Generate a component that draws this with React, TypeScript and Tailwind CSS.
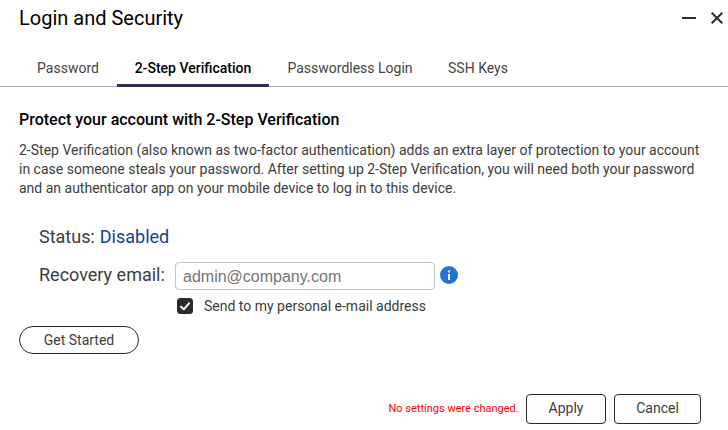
import React from "react";

const tabs = [
  { label: "Password", cls: "w-[98px] text-[#444]" },
  { label: "2-Step Verification", cls: "w-[152px] font-medium text-black border-b-[3px] border-[#322b4e]" },
  { label: "Passwordless Login", cls: "w-[162px] text-[#444]" },
  { label: "SSH Keys", cls: "w-[94px] text-[#444]" },
];

export default function App() {
  return (
    <main className="h-[430px] w-[728px] overflow-hidden bg-white font-['Roboto',sans-serif] text-[#3c3c3c]">
      <header className="flex h-[50px] items-start justify-between pl-[19px] pr-[4px]">
        <h1 className="pt-[4px] text-[20px] leading-7 text-black">Login and Security</h1>
        <div className="flex gap-[14px] pt-[11px]">
          <svg width="14" height="14" viewBox="0 0 14 14" stroke="#2d2d2d" strokeWidth="2"><path d="M0 7H14" /></svg>
          <svg width="14" height="14" viewBox="0 0 14 14" stroke="#2d2d2d" strokeWidth="2"><path d="M1.7 1.7L12.3 12.3M12.3 1.7L1.7 12.3" /></svg>
        </div>
      </header>
      <nav className="flex h-[37px] border-b border-[#aaa] pl-[19px]">
        {tabs.map((t) => (
          <div key={t.label} className={"flex h-[37px] justify-center pt-[8px] text-[14px] leading-5 " + t.cls}>{t.label}</div>
        ))}
      </nav>
      <section className="pl-[19px] pt-[23px]">
        <h2 className="text-[16px] font-medium leading-5 text-black">Protect your account with 2-Step Verification</h2>
        <p className="mt-[11px] whitespace-nowrap text-[14px] leading-[19px]">
          2-Step Verification (also known as two-factor authentication) adds an extra layer of protection to your account<br />
          in case someone steals your password. After setting up 2-Step Verification, you will need both your password<br />
          and an authenticator app on your mobile device to log in to this device.
        </p>
        <div className="mt-[27px] pl-[20px] text-[18px] leading-6">Status: <span className="ml-[0.5px] text-[#14418c]">Disabled</span></div>
        <div className="mt-[13px] flex h-[28px] items-center pl-[20px]">
          <label className="mb-[2px] w-[136px] text-[18px] leading-6">Recovery email:</label>
          <input placeholder="admin@company.com" className="h-[28px] w-[260px] rounded-[4px] border border-[#c4c4c4] px-[7px] pt-[2px] font-['Liberation_Sans',sans-serif] text-[16px] placeholder:text-[#757575]" />
          <svg className="mb-[2px] ml-[5px]" width="18" height="18" viewBox="0 0 18 18"><circle cx="9" cy="9" r="9" fill="#2471d8" /><path d="M8 4.5h2v2H8zM8 8h2v6H8z" fill="#fff" /></svg>
        </div>
        <div className="mt-[6px] flex h-5 items-center pl-[158px] text-[14px]">
          <svg width="16" height="16" viewBox="0 0 16 16"><rect width="16" height="16" rx="3.5" fill="#2b2b2b" /><path d="M4 8.7L6.8 11.3L12 5.3" fill="none" stroke="#fff" strokeWidth="2" strokeLinecap="round" strokeLinejoin="round" /></svg>
          <span className="ml-[11px]">Send to my personal e-mail address</span>
        </div>
        <button className="mt-[10px] h-[28px] w-[120px] rounded-full border border-[#2b2b2b] text-[14px]">Get Started</button>
      </section>
      <footer className="mt-[40px] flex h-[30px] items-center pl-[388px]">
        <span className="w-[138px] whitespace-nowrap pl-[0.5px] text-[11px] text-[#f00]">No settings were changed.</span>
        <button className="h-[30px] w-[80px] rounded-[4px] border border-[#2b2b2b] pb-[2px] text-[14px]">Apply</button>
        <button className="ml-[8px] h-[30px] w-[87px] rounded-[4px] border border-[#2b2b2b] pb-[2px] text-[14px]">Cancel</button>
      </footer>
    </main>
  );
}
